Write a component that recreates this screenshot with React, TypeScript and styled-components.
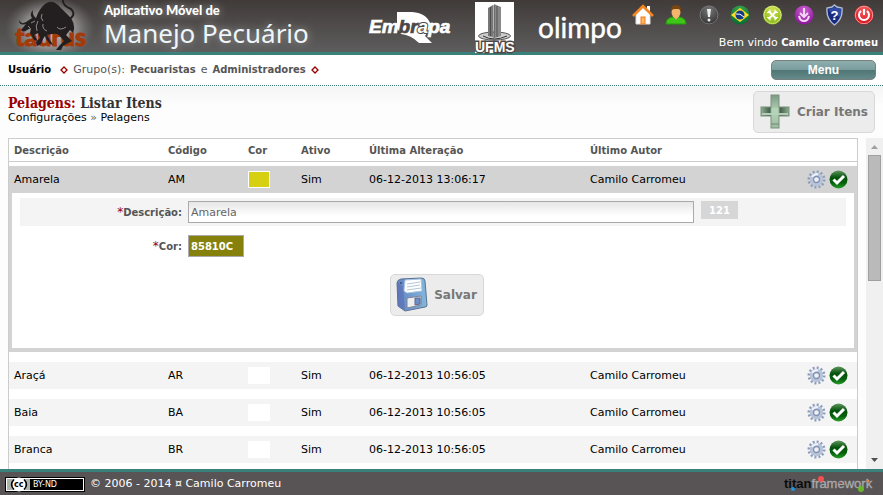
import React from "react";
import styled, { createGlobalStyle } from "styled-components";

const SANS = `"DejaVu Sans", Verdana, sans-serif`;

const GlobalStyle = createGlobalStyle`
  *, *::before, *::after { box-sizing: border-box; }
  body { margin: 0; background: #fdfdfd; font: 11px/14px ${SANS}; color: #000; }
  b { font-size: 10px; }
  button, input { font: inherit; }
  h1, p { margin: 0; }
  svg { display: block; flex: none; }
`;

const Page = styled.div`
  display: flex;
  flex-direction: column;
  height: 100vh;
  overflow: hidden;
`;

const Header = styled.header`
  display: flex;
  flex: none;
  height: 55px;
  border-bottom: 3px solid #3a807b;
  background: linear-gradient(#403b39, #5e5d5d);
  color: #fff;
`;

const Brand = styled.a`
  display: flex;
  width: 368px;
  flex: none;
  color: #fff;
  text-decoration: none;
`;

const BrandText = styled.div`
  display: flex;
  flex-direction: column;
  white-space: nowrap;
  text-shadow: 0 0 8px #aaa;
`;

const Tagline = styled.span`
  padding-top: 3px;
  font: 900 13px/14px Lato, sans-serif;
`;

const AppName = styled.span`
  font: 400 26px/32px "Noto Sans", sans-serif;
  color: #eef6fa;
`;

const Partners = styled.div`
  display: flex;
  gap: 22px;
`;

const Account = styled.div`
  display: flex;
  flex-direction: column;
  align-items: flex-end;
  flex: none;
  margin-left: auto;
  padding: 4px 5px 0 0;
`;

const Shortcuts = styled.nav`
  display: flex;
  justify-content: space-between;
  width: 242px;
  margin-right: 4px;
`;

const IconButton = styled.button`
  display: block;
  padding: 0;
  border: 0;
  background: none;
  cursor: pointer;
`;

const Welcome = styled.p`
  margin-top: 10px;
  white-space: nowrap;
`;

const UserBar = styled.div`
  display: flex;
  align-items: center;
  justify-content: space-between;
  flex: none;
  height: 31px;
  padding: 0 7px 0 8px;
  border-bottom: 1px dotted #3a807b;
  background: #fff;
`;

const Groups = styled.p`
  display: flex;
  align-items: center;
  gap: 5px;
  color: #555;
`;

const UserName = styled.b`
  margin-right: 4px;
  color: #000;
`;

const MenuButton = styled.button`
  width: 105px;
  height: 20px;
  padding: 0;
  border: 1px solid #77807f;
  border-radius: 5px;
  background: linear-gradient(#8eaeae, #7a9c9c 50%, #4f7475 50%, #658a8a);
  color: #fff;
  font: bold 12px/16px "Liberation Sans", Arial, sans-serif;
`;

const Toolbar = styled.div`
  display: flex;
  align-items: flex-start;
  justify-content: space-between;
  flex: none;
  height: 52px;
  padding: 5px 8px 0;
  background: linear-gradient(#f5f5f5, #fdfdfd 20px);
`;

const Title = styled.h1`
  padding-top: 5px;
  font: bold 14px/15px "DejaVu Serif Condensed", "DejaVu Serif", serif;
  color: #333;
`;

const Accent = styled.span<{ $tone?: string }>`
  color: ${(p) => p.$tone ?? "#900"};
`;

const ActionButton = styled.button`
  display: flex;
  align-items: center;
  gap: 6px;
  height: 42px;
  padding: 0 6px 0 5px;
  border: 1px solid #d8d8d8;
  border-radius: 5px;
  background: #ececec;
  color: #777;
  font: bold 12px/16px ${SANS};
  white-space: nowrap;
`;

const Body = styled.main`
  display: flex;
  flex: 1;
  min-height: 0;
  gap: 8px;
  padding-left: 8px;
`;

const ListFrame = styled.section`
  flex: 1;
  overflow: hidden;
  border: 1px solid #ccc;
  border-bottom: 0;
  background: #fff;
`;

const ListTable = styled.table`
  width: 100%;
  table-layout: fixed;
  border-collapse: separate;
  border-spacing: 0;
  tbody::before {
    content: "";
    display: table-row;
    height: 4px;
  }
`;

const Column = styled.col<{ $width?: number }>`
  width: ${(p) => (p.$width ? `${p.$width}px` : "auto")};
`;

const HeadCell = styled.th`
  height: 23px;
  padding: 2px 5px 0;
  border-bottom: 1px solid #ccc;
  color: #555;
  font-size: 10px;
  text-align: left;
`;

const Cell = styled.td<{ $open?: boolean }>`
  height: ${(p) => (p.$open ? 27 : 37)}px;
  padding: 0 5px;
  border-bottom: ${(p) => (p.$open ? 0 : 10)}px solid #fff;
  background: ${(p) => (p.$open ? "#d3d3d3" : "#f4f4f4")};
`;

const Swatch = styled.span<{ $color: string }>`
  display: block;
  width: 22px;
  height: 17px;
  border: 1px solid #fff;
  background: ${(p) => p.$color};
`;

const RowActions = styled.div`
  display: flex;
  justify-content: flex-end;
  gap: 3px;
  padding-right: 4px;
`;

const DetailCell = styled.td`
  padding: 0;
  border-bottom: 10px solid #fff;
`;

const DetailForm = styled.form`
  height: 159px;
  padding: 5px 8px 0;
  border: solid #d3d3d3;
  border-width: 0 3px 4px;
`;

const Field = styled.div<{ $shaded?: boolean }>`
  display: flex;
  align-items: center;
  height: 28px;
  margin-bottom: 6px;
  background: ${(p) => (p.$shaded ? "#f4f4f4" : "#fff")};
`;

const Label = styled.label`
  flex: none;
  width: 162px;
  margin-right: 6px;
  color: #555;
  font-size: 10px;
  font-weight: bold;
  text-align: right;
`;

const Required = styled.span`
  color: #900;
  font-size: 12px;
  font-weight: normal;
`;

const TextInput = styled.input`
  flex: 1;
  min-width: 0;
  height: 22px;
  padding: 0 2px;
  border: 1px solid #aaa;
  background: linear-gradient(#e6e6e6, #fff 14px);
  color: #666;
`;

const ColorInput = styled.input`
  width: 56px;
  height: 22px;
  padding: 0 2px;
  border: 1px solid #aaa;
  background: #85810c;
  color: #fff;
  font-size: 10px;
  font-weight: bold;
`;

const Counter = styled.output`
  width: 37px;
  height: 18px;
  margin: 0 108px 4px 7px;
  background: #d6d6d6;
  color: #fff;
  font-size: 10px;
  font-weight: bold;
  line-height: 19px;
  text-align: center;
`;

const FormActions = styled.div`
  display: flex;
  justify-content: center;
  padding: 8px 0 0 8px;
`;

const ScrollTrack = styled.div`
  display: flex;
  flex-direction: column;
  align-items: center;
  width: 17px;
  background: #f0f0f0;
`;

const Thumb = styled.div`
  flex: none;
  width: 13px;
  height: 126px;
  margin-bottom: auto;
  border: 1px solid #a0a0a0;
  background: #bababa;
`;

const Footer = styled.footer`
  display: flex;
  align-items: center;
  flex: none;
  gap: 5px;
  height: 26px;
  padding: 1px 8px 0 5px;
  border-top: 3px solid #3a807b;
  background: #585455;
  color: #fff;
`;

const FrameworkLink = styled.a`
  margin-left: auto;
`;

const TaurusLogo = () => (
  <svg width="104" height="52" viewBox="0 0 104 52" role="img" aria-label="taurus">
    <defs>
      <radialGradient id="halo">
        <stop offset="0" stopColor="#fff" stopOpacity=".75" />
        <stop offset=".6" stopColor="#ddd" stopOpacity=".4" />
        <stop offset="1" stopColor="#999" stopOpacity="0" />
      </radialGradient>
    </defs>
    <ellipse cx="50" cy="28" rx="45" ry="32" fill="url(#halo)" />
    <text x="15" y="46" fill="#a43a09" stroke="#a43a09" strokeWidth="1" fontFamily="Lato, sans-serif" fontWeight="900" fontSize="25">taurus</text>
    <path d="M19 20 Q21 25 26 22 L32 18 Q29 14 33 10 Q32 15 36 18 Q39 9 45 4 Q52 -1 58 5 Q64 11 71 18 Q76 26 73 33 L70 30 L66 35 L72 41 L63 46 L61 50 H56 L60 45 L64 41 L59 35 Q56 33 52 34 L47 35 L50 40 L53 45 L50 44 L46 39 L45 36 L43 39 L41 44 L37 46 L36 42 L40 38 L38 33 L34 35 L38 41 L34 40 L30 33 L31 28 L27 30 Q23 33 21 30 L26 24 Q19 26 19 20Z" fill="#231f20" />
    <path d="M68 20 Q77 15 71 9 Q62 5 63 0" fill="none" stroke="#231f20" strokeWidth="2" />
    <path d="M42 14 Q40 18 43 21 M38 21 Q35 26 37 31 M43 24 Q42 29 47 31 M31 23 L35 21 M57 27 Q60 31 66 27 M28 26 L30 28" fill="none" stroke="#aaa5a2" strokeWidth=".8" />
  </svg>
);

const EmbrapaLogo = () => (
  <svg width="85" height="52" viewBox="0 0 85 52" role="img" aria-label="Embrapa">
    <path d="M29 12 H44 Q60 13 63 26 L57 36 L64 43 H51 Q43 35 33 34 L29 28Z" fill="#fff" />
    <text x="1" y="33" fill="#fff" stroke="#fff" strokeWidth=".7" fontFamily="Liberation Sans, Arial, sans-serif" fontSize="19" fontWeight="bold" fontStyle="italic">
      Em<tspan fill="#4b4746" stroke="#4b4746">br</tspan><tspan stroke="#4b4746" strokeWidth="2" paintOrder="stroke">a</tspan>pa
    </text>
  </svg>
);

const UfmsLogo = () => (
  <svg width="41" height="54" viewBox="0 0 41 54" role="img" aria-label="UFMS">
    <rect y="2" width="39" height="51" fill="#fff" />
    <ellipse cx="19.500" cy="36" rx="16" ry="4" fill="#ccc" stroke="#555" />
    <path d="M13 36 V8 L18 5 V37Z" fill="#777" />
    <path d="M19 38 V4 L26 7 V36Z" fill="#898989" />
    <path d="M19 38V5 M22 37V6 M15.500 36V7" stroke="#444" strokeWidth=".8" />
    <path d="M8 36 Q19 42 32 36" fill="none" stroke="#333" />
    <text x="0" y="52" fill="#fff" stroke="#4d4948" strokeWidth="3" paintOrder="stroke" fontFamily="Liberation Sans, Arial, sans-serif" fontSize="14" fontWeight="bold">UFMS</text>
  </svg>
);

const OlimpoLogo = () => (
  <svg width="88" height="52" viewBox="0 0 88 52" role="img" aria-label="olimpo">
    <text x="0" y="38" fill="#fff" stroke="#fff" strokeWidth=".4" fontFamily="Lato, sans-serif" fontSize="28">olimpo</text>
  </svg>
);

const Orb = ({ id, light, dark, width = 20, children }: { id: string; light: string; dark: string; width?: number; children: React.ReactNode }) => (
  <svg width={width} height="22" viewBox="0 0 20 22">
    <defs>
      <radialGradient id={id} cx=".5" cy=".25" r=".75">
        <stop offset="0" stopColor={light} />
        <stop offset="1" stopColor={dark} />
      </radialGradient>
    </defs>
    <circle cx="10" cy="11" r="9.500" fill={`url(#${id})`} />
    {children}
  </svg>
);

const HomeIcon = () => (
  <svg width="22" height="22" viewBox="0 0 22 22">
    <path d="M4 10 L11 4 L18 10 V20 H4Z" fill="#fff" stroke="#ddd" />
    <path d="M15 2 H18 V8 L15 5Z" fill="#fff" />
    <path d="M1 12 L11 2 L21 12" fill="none" stroke="#f7851f" strokeWidth="2.500" />
    <rect x="9" y="13" width="4" height="7" fill="#ffb366" stroke="#f47a14" />
  </svg>
);

const UserIcon = () => (
  <svg width="22" height="22" viewBox="0 0 22 22">
    <path d="M1 20 Q1 14 8 13 H14 Q21 14 21 20Z" fill="#3fc419" stroke="#249b0b" />
    <path d="M8 12 L11 16 L14 12Z" fill="#ecaa60" />
    <ellipse cx="11" cy="8" rx="4.500" ry="6" fill="#f3b66c" />
    <path d="M6 8 Q5 1 11 1 Q17 1 16 8 L14 5 H9 L7 6Z" fill="#754512" />
  </svg>
);

const AlertIcon = () => (
  <Orb id="alert" light="#777" dark="#333">
    <circle cx="10" cy="11" r="9" fill="none" stroke="#777" />
    <path d="M8 5 H12 L11 13 H9Z" fill="#eee" />
    <circle cx="10" cy="16" r="1.500" fill="#eee" />
  </Orb>
);

const BrazilIcon = () => (
  <Orb id="brazil" light="#3ca951" dark="#086b31">
    <path d="M1 11 L10 4 L19 11 L10 18Z" fill="#ffdc27" />
    <circle cx="10" cy="11" r="4.500" fill="#123b86" />
    <path d="M6 10 Q10 9 14 13" fill="none" stroke="#fff" />
  </Orb>
);

const ToolsIcon = () => (
  <Orb id="tools" light="#cfe050" dark="#84b812" width={21}>
    <circle cx="10" cy="11" r="8.500" fill="none" stroke="#eaf2a4" strokeWidth=".7" />
    <path d="M6 7 L14 15 M14 7 L6 15" fill="none" stroke="#fff" strokeWidth="1.800" />
    <path d="M4.500 8.500 H7.500 V5.500 M12.500 5.500 V8.500 H15.500 M4.500 13.500 H7.500 V16.500 M12.500 16.500 V13.500 H15.500" fill="none" stroke="#fff" />
  </Orb>
);

const DownloadIcon = () => (
  <Orb id="download" light="#cb5fd0" dark="#8b149b">
    <path d="M10 4 V12 M6 9 L10 13 L14 9 M5 12 Q6 17 10 17 Q14 17 15 12" fill="none" stroke="#f1d7f4" strokeWidth="2" />
  </Orb>
);

const ShieldIcon = () => (
  <svg width="17" height="22" viewBox="0 0 17 22">
    <path d="M8.500 1 L11 3 L16 4 Q17 15 8.500 21 Q0 15 1 4 L6 3Z" fill="#152a80" stroke="#b4bed2" strokeWidth="1.400" />
    <path d="M9 3 L15 5 Q16 10 14 13 L3 7 V5Z" fill="#4c6cc6" opacity=".5" />
    <text x="4.500" y="16" fill="#fff" fontFamily="Liberation Sans, sans-serif" fontSize="13" fontWeight="bold">?</text>
  </svg>
);

const PowerIcon = () => (
  <Orb id="power" light="#f56262" dark="#d80b18">
    <circle cx="10" cy="11" r="8.700" fill="none" stroke="#f29999" />
    <path d="M7 7 A5 5 0 1 0 13 7 M10 5 V11" fill="none" stroke="#fff" strokeWidth="2" />
  </Orb>
);

const Diamond = () => (
  <svg width="8" height="8" viewBox="0 0 8 8">
    <path d="M4 1 L7 4 L4 7 L1 4Z" fill="#fff" stroke="#900" strokeWidth="1.300" />
  </svg>
);

const PlusIcon = () => (
  <svg width="32" height="36" viewBox="0 0 32 36">
    <defs>
      <linearGradient id="plusH"><stop offset="0" stopColor="#8fae93" /><stop offset=".3" stopColor="#48624e" /><stop offset=".5" stopColor="#b4d3b8" /><stop offset=".7" stopColor="#48624e" /><stop offset="1" stopColor="#8fae93" /></linearGradient>
      <linearGradient id="plusV" x2="0" y2="1"><stop offset="0" stopColor="#7d9b83" /><stop offset=".5" stopColor="#b4d3b8" /><stop offset="1" stopColor="#9cba9f" /></linearGradient>
    </defs>
    <rect x="2" y="13" width="28" height="9" fill="url(#plusH)" stroke="#78917b" />
    <rect x="12" y="1" width="8" height="33" fill="url(#plusV)" stroke="#78917b" />
    <path d="M3 20 H29" stroke="#b5ccb8" strokeWidth="2" />
    <path d="M12.500 14 H19.500 V21 H12.500Z" fill="#b4d3b8" />
    <path d="M12 30 H20" stroke="#6c8a70" />
  </svg>
);

const FloppyIcon = () => (
  <svg width="32" height="36" viewBox="0 0 32 36">
    <defs>
      <linearGradient id="disk"><stop offset="0" stopColor="#6385c4" /><stop offset="1" stopColor="#83b7dc" /></linearGradient>
    </defs>
    <path d="M1 6 Q1 3 5 2 L25 1 Q29 1 29 4 L31 28 Q31 30 29 30 L9 34 L2 29Z" fill="url(#disk)" stroke="#5a7193" />
    <path d="M1 5 L7 10 L9 33 L2 29Z" fill="#5b6fb3" opacity=".65" />
    <path d="M9 3 L25 2 L26 14 L11 16 L8 14Z" fill="#fff" stroke="#a9c5e3" />
    <path d="M11 7 L24 5 M11 10 L24 8 M11 13 L25 11" stroke="#b5c5dc" />
    <path d="M11 21 L25 19 L25 28 L11 31Z" fill="#eee" stroke="#7d8296" />
    <path d="M19 21 L24 21 L24 27 L19 28Z" fill="#6b8fc4" stroke="#576a91" />
    <circle cx="5" cy="6" r="1" fill="#384c75" />
  </svg>
);

const GearIcon = () => (
  <svg width="19" height="19" viewBox="0 0 19 19">
    <circle cx="9.500" cy="9.500" r="7.500" fill="none" stroke="#8d9dbb" strokeWidth="3" strokeDasharray="1.960 1.960" />
    <circle cx="9.500" cy="9.500" r="5.200" fill="#d2dbe9" stroke="#b6c3d9" strokeWidth="3" />
    <path d="M5 7 Q7 4 11 4" fill="none" stroke="#eef3fb" strokeWidth="2" />
    <circle cx="9.500" cy="9.500" r="3" fill="#eceff5" stroke="#8291b0" strokeWidth="1.300" />
  </svg>
);

const CheckIcon = () => (
  <svg width="19" height="19" viewBox="0 0 19 19">
    <defs>
      <linearGradient id="check" x2="0" y2="1"><stop offset="0" stopColor="#5f975f" /><stop offset=".4" stopColor="#05520c" /><stop offset=".7" stopColor="#05610c" /><stop offset="1" stopColor="#28a028" /></linearGradient>
    </defs>
    <circle cx="9.500" cy="9.500" r="9" fill="url(#check)" />
    <path d="M4.500 9.500 L8 13 L15 6" fill="none" stroke="#fff" strokeWidth="3" />
  </svg>
);

const LicenseBadge = () => (
  <svg width="80" height="15" viewBox="0 0 80 15" role="img" aria-label="Creative Commons BY-ND">
    <rect width="80" height="15" fill="#000" />
    <rect x="1" y="1" width="78" height="13" fill="#fff" />
    <rect x="2" y="2" width="23" height="11" fill="#aab2ab" />
    <rect x="25" y="2" width="53" height="11" fill="#000" />
    <circle cx="14" cy="7.500" r="7" fill="#fff" />
    <path d="M9 2.500 Q4 7.500 9 12.500 M19 2.500 Q24 7.500 19 12.500" fill="none" stroke="#000" strokeWidth="1.500" />
    <g fontFamily="DejaVu Sans, sans-serif">
      <text x="9" y="10" fontSize="8" fontWeight="bold">cc</text>
      <text x="28" y="10" fontSize="8" fill="#fff">BY-ND</text>
    </g>
  </svg>
);

const TitanLogo = () => (
  <svg width="92" height="22" viewBox="0 0 92 22" role="img" aria-label="titan framework">
    <text x="1" y="15" fontFamily="Liberation Sans, sans-serif" fontSize="13" fontWeight="bold" fill="#0c0c0c">
      titan<tspan fontWeight="normal" fill="#aaa" stroke="#aaa" strokeWidth=".3">framework</tspan>
    </text>
    <circle cx="38" cy="6" r="3" fill="#f25150" />
    <circle cx="10" cy="16" r="2" fill="#2094dc" />
    <circle cx="78" cy="16" r="3" fill="#69b52c" />
    <circle cx="85" cy="8" r="1.500" fill="#ef8241" />
    <circle cx="57" cy="10" r="1" fill="#b94038" />
  </svg>
);

const shortcuts = [
  { label: "Início", Icon: HomeIcon },
  { label: "Perfil", Icon: UserIcon },
  { label: "Alertas", Icon: AlertIcon },
  { label: "Idioma", Icon: BrazilIcon },
  { label: "Ferramentas", Icon: ToolsIcon },
  { label: "Baixar", Icon: DownloadIcon },
  { label: "Ajuda", Icon: ShieldIcon },
  { label: "Sair", Icon: PowerIcon },
];

const rows = [
  { name: "Amarela", code: "AM", color: "#d7d010", date: "06-12-2013 13:06:17", open: true },
  { name: "Araçá", code: "AR", color: "#fff", date: "06-12-2013 10:56:05", open: false },
  { name: "Baia", code: "BA", color: "#fff", date: "06-12-2013 10:56:05", open: false },
  { name: "Branca", code: "BR", color: "#fff", date: "06-12-2013 10:56:05", open: false },
];

const EditForm = () => (
  <DetailForm onSubmit={(e) => e.preventDefault()}>
    <Field $shaded>
      <Label htmlFor="description"><Required>*</Required>Descrição:</Label>
      <TextInput id="description" defaultValue="Amarela" />
      <Counter htmlFor="description">121</Counter>
    </Field>
    <Field>
      <Label htmlFor="color"><Required>*</Required>Cor:</Label>
      <ColorInput id="color" defaultValue="85810C" />
    </Field>
    <FormActions>
      <ActionButton type="submit"><FloppyIcon />Salvar</ActionButton>
    </FormActions>
  </DetailForm>
);

export default function App() {
  return (
    <Page>
      <GlobalStyle />
      <Header>
        <Brand href="#">
          <TaurusLogo />
          <BrandText>
            <Tagline>Aplicativo Móvel de</Tagline>
            <AppName>Manejo Pecuário</AppName>
          </BrandText>
        </Brand>
        <Partners>
          <EmbrapaLogo />
          <UfmsLogo />
          <OlimpoLogo />
        </Partners>
        <Account>
          <Shortcuts>
            {shortcuts.map(({ label, Icon }) => (
              <IconButton key={label} aria-label={label}><Icon /></IconButton>
            ))}
          </Shortcuts>
          <Welcome>Bem vindo <b>Camilo Carromeu</b></Welcome>
        </Account>
      </Header>
      <UserBar>
        <Groups>
          <UserName>Usuário</UserName>
          <Diamond />
          <span>Grupo(s):</span>
          <b>Pecuaristas</b>
          <span>e</span>
          <b>Administradores</b>
          <Diamond />
        </Groups>
        <MenuButton>Menu</MenuButton>
      </UserBar>
      <Toolbar>
        <div>
          <Title><Accent>Pelagens:</Accent> Listar Itens</Title>
          <p>Configurações <Accent $tone="#666">»</Accent> Pelagens</p>
        </div>
        <ActionButton><PlusIcon />Criar Itens</ActionButton>
      </Toolbar>
      <Body>
        <ListFrame>
          <ListTable>
            <colgroup>
              <Column $width={154} />
              <Column $width={80} />
              <Column $width={53} />
              <Column $width={68} />
              <Column $width={221} />
              <Column />
              <Column $width={60} />
            </colgroup>
            <thead>
              <tr>
                <HeadCell>Descrição</HeadCell>
                <HeadCell>Código</HeadCell>
                <HeadCell>Cor</HeadCell>
                <HeadCell>Ativo</HeadCell>
                <HeadCell>Última Alteração</HeadCell>
                <HeadCell>Último Autor</HeadCell>
                <HeadCell aria-label="Ações" />
              </tr>
            </thead>
            <tbody>
              {rows.map((row) => (
                <React.Fragment key={row.code}>
                  <tr>
                    <Cell $open={row.open}>{row.name}</Cell>
                    <Cell $open={row.open}>{row.code}</Cell>
                    <Cell $open={row.open}><Swatch $color={row.color} /></Cell>
                    <Cell $open={row.open}>Sim</Cell>
                    <Cell $open={row.open}>{row.date}</Cell>
                    <Cell $open={row.open}>Camilo Carromeu</Cell>
                    <Cell $open={row.open}>
                      <RowActions>
                        <IconButton aria-label={`Editar ${row.name}`}><GearIcon /></IconButton>
                        <IconButton aria-label={`Ativar ${row.name}`}><CheckIcon /></IconButton>
                      </RowActions>
                    </Cell>
                  </tr>
                  {row.open && (
                    <tr>
                      <DetailCell colSpan={7}><EditForm /></DetailCell>
                    </tr>
                  )}
                </React.Fragment>
              ))}
            </tbody>
          </ListTable>
        </ListFrame>
        <ScrollTrack aria-hidden="true">
          <svg width="17" height="17" viewBox="0 0 17 17"><path d="M5 11 L8.500 7 L12 11Z" fill="#a0a0a0" /></svg>
          <Thumb />
          <svg width="17" height="17" viewBox="0 0 17 17"><path d="M5 6 L8.500 10 L12 6Z" fill="#505050" /></svg>
        </ScrollTrack>
      </Body>
      <Footer>
        <LicenseBadge />
        <span>© 2006 - 2014 ¤ Camilo Carromeu</span>
        <FrameworkLink href="#"><TitanLogo /></FrameworkLink>
      </Footer>
    </Page>
  );
}
